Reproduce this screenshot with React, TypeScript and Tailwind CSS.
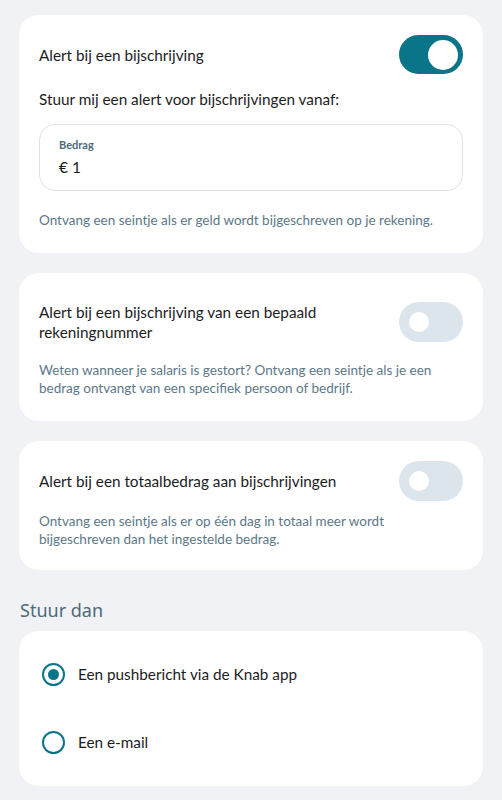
import React from "react";

function Toggle({ on }: { on: boolean }) {
  return on ? (
    <div className="w-[64px] h-[39px] rounded-full bg-[#0a7489] flex items-center justify-end pr-[5px] shrink-0">
      <div className="w-[30px] h-[30px] rounded-full bg-white" />
    </div>
  ) : (
    <div className="w-[64px] h-[40px] rounded-full bg-[#dde5ec] flex items-center pl-[10px] shrink-0">
      <div className="w-[20px] h-[20px] rounded-full bg-white" />
    </div>
  );
}

function Radio({ checked }: { checked: boolean }) {
  return (
    <div className="w-[23px] h-[23px] rounded-full border-[2.5px] border-[#0a7489] flex items-center justify-center shrink-0">
      {checked && <div className="w-[11px] h-[11px] rounded-full bg-[#0a7489]" />}
    </div>
  );
}

export default function App() {
  const font = { fontFamily: '"Lato", "Open Sans", sans-serif' };
  return (
    <div
      className="min-h-[800px] bg-[#f1f2f6] px-[19px] pt-[15px] pb-[14px] text-[#1b1c1e]"
      style={font}
    >
      <div className="bg-white rounded-[20px] px-5 pt-5 pb-[24px]">
        <div className="flex items-center justify-between">
          <span className="text-[15.3px] leading-[20px]">Alert bij een bijschrijving</span>
          <Toggle on />
        </div>
        <div className="mt-[15px] text-[15.3px] leading-[20px]">
          Stuur mij een alert voor bijschrijvingen vanaf:
        </div>
        <div className="mt-[15px] h-[67px] rounded-[16px] border border-[#dde3e8] px-[19px] pt-[12px]">
          <div className="text-[11px] leading-[16px] font-bold text-[#4e6a7b]">Bedrag</div>
          <div className="mt-[4px] text-[15.5px] leading-[20px]">€ 1</div>
        </div>
        <div className="mt-[20px] text-[13.5px] leading-[18px] text-[#5c7888]">
          Ontvang een seintje als er geld wordt bijgeschreven op je rekening.
        </div>
      </div>

      <div className="mt-[20px] bg-white rounded-[20px] px-5 pt-[29px] pb-[24px]">
        <div className="flex items-center justify-between gap-6">
          <span className="text-[15.3px] leading-[20px]">
            Alert bij een bijschrijving van een bepaald rekeningnummer
          </span>
          <Toggle on={false} />
        </div>
        <div className="mt-[19px] text-[13.5px] leading-[18px] text-[#5c7888]">
          Weten wanneer je salaris is gestort? Ontvang een seintje als je een bedrag ontvangt van een specifiek persoon of bedrijf.
        </div>
      </div>

      <div className="mt-[20px] bg-white rounded-[20px] px-5 pt-[20px] pb-[22px]">
        <div className="flex items-center justify-between gap-6">
          <span className="text-[15.3px] leading-[20px]">
            Alert bij een totaalbedrag aan bijschrijvingen
          </span>
          <Toggle on={false} />
        </div>
        <div className="mt-[11px] text-[13.5px] leading-[18px] text-[#5c7888] pr-[60px]">
          Ontvang een seintje als er op één dag in totaal meer wordt bijgeschreven dan het ingestelde bedrag.
        </div>
      </div>

      <div className="mt-[28px] pl-px text-[18px] leading-[24px] text-[#4d6a7a]" style={{ fontFamily: '"Noto Sans", sans-serif' }}>
        Stuur dan
      </div>

      <div className="mt-[9px] bg-white rounded-[20px] px-[23px] pt-[9px] pb-[10px]">
        <div className="h-[68px] flex items-center gap-[13px]">
          <Radio checked />
          <span className="text-[15.3px] leading-[20px]">Een pushbericht via de Knab app</span>
        </div>
        <div className="h-[68px] flex items-center gap-[13px]">
          <Radio checked={false} />
          <span className="text-[15.3px] leading-[20px]">Een e-mail</span>
        </div>
      </div>
    </div>
  );
}
